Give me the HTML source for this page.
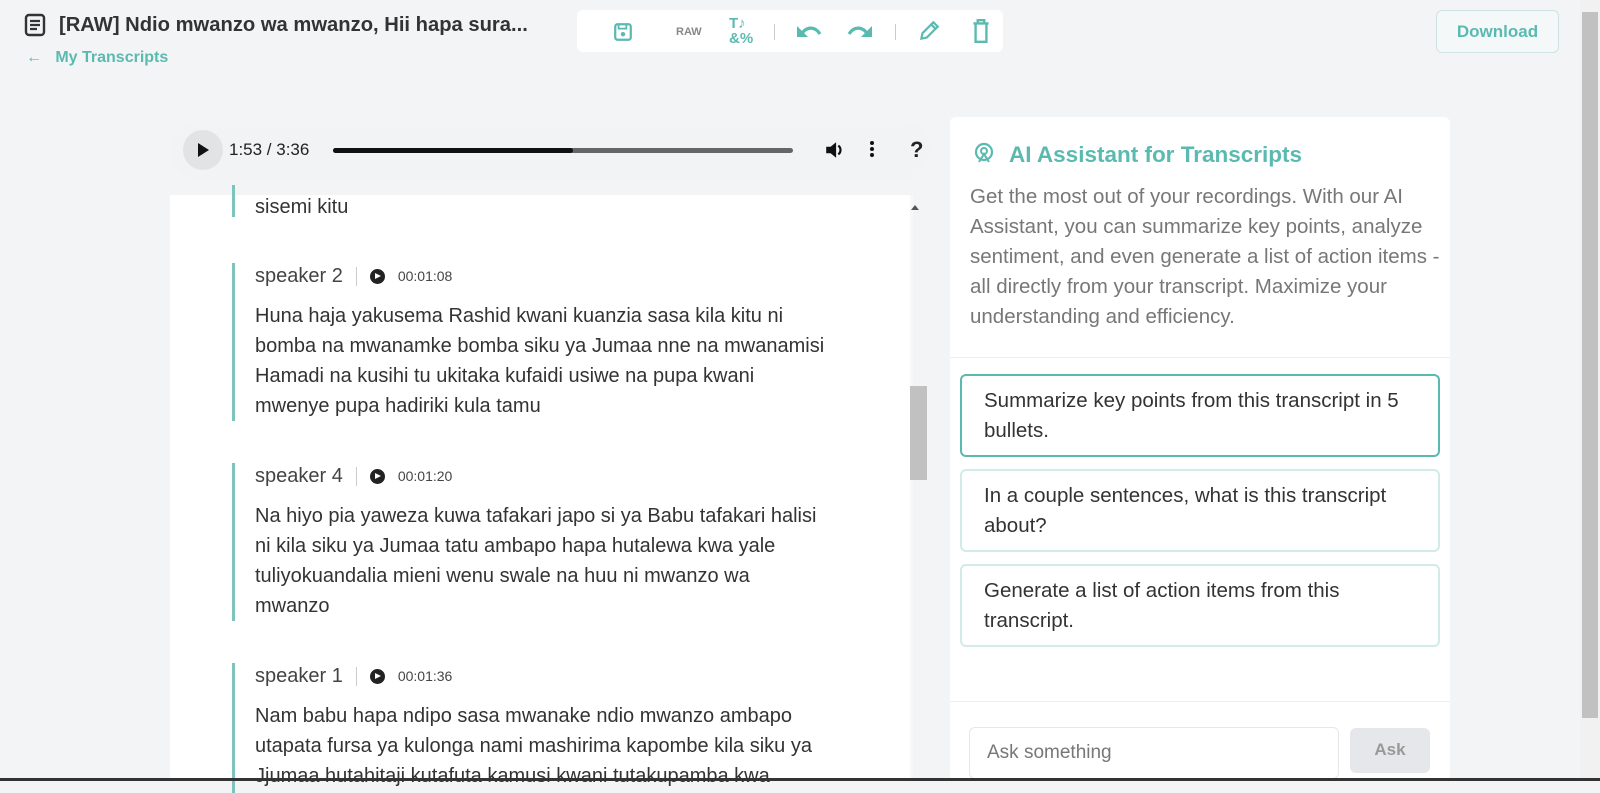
<!DOCTYPE html>
<html><head><meta charset="utf-8">
<style>
*{box-sizing:border-box;margin:0;padding:0}
body{width:1600px;height:781px;overflow:hidden;background:#f3f4f6;font-family:"Liberation Sans",sans-serif;position:relative;color:#333}
.abs{position:absolute}
.title{left:24px;top:13px;font-size:20.2px;font-weight:bold;color:#333;display:flex;align-items:center;gap:13px}
.back{left:26px;top:49px;font-size:16px;font-weight:bold;color:#5bbab0}
.toolbar{left:577px;top:10px;width:426px;height:42px;background:#fff;border-radius:6px}
.dl{left:1436px;top:10px;width:123px;height:43px;border:1px solid #cfe3e1;border-radius:6px;font-size:17px;font-weight:bold;color:#5bbab0;display:flex;align-items:center;justify-content:center;background:#f5f8f8}
.player{left:170px;top:121px;width:760px;height:58px;background:#f1f3f4;border-radius:30px}
.tr{left:170px;top:195px;width:743px;height:586px;background:#fff}
.seg{position:absolute;left:62px;border-left:3px solid #7fc4bc;padding-left:20px;width:600px}
.spk{font-size:20px;color:#444;display:flex;align-items:center;height:26px}
.spk .bar{width:1px;height:19px;background:#ccc;margin:0 13px}
.spk .dot{width:15px;height:15px;border-radius:50%;background:#222;margin-right:13px;position:relative}
.spk .dot:after{content:"";position:absolute;left:5px;top:4px;border-left:6px solid #fff;border-top:3.5px solid transparent;border-bottom:3.5px solid transparent}
.spk .ts{font-size:14px;color:#444}
.txt{font-size:20px;line-height:30px;color:#333;margin-top:12px;width:571px}
.ai{left:950px;top:117px;width:500px;height:664px;background:#fff;border-radius:6px}
.sug{position:absolute;left:10px;width:480px;height:83px;border:2px solid #d3ebe8;border-radius:6px;padding:10px 22px;font-size:20.5px;line-height:30px;color:#333}
</style></head><body>
<div class="abs title">
<svg width="22" height="24" viewBox="0 0 22 24"><rect x="2" y="2" width="18" height="20" rx="3" fill="none" stroke="#333" stroke-width="2.4"/><path d="M6 8h10M6 12h10M6 16h7" stroke="#333" stroke-width="2.2"/></svg>
<span>[RAW] Ndio mwanzo wa mwanzo, Hii hapa sura...</span></div>
<div class="abs back">←&nbsp;&nbsp;&nbsp;My Transcripts</div>
<div class="abs toolbar">
<svg class="abs" style="left:36px;top:12px" width="20" height="20" viewBox="0 0 18 18"><rect x="2" y="2" width="14" height="14" rx="2" fill="none" stroke="#5bbab0" stroke-width="2"/><path d="M5 2v4h7V2" fill="none" stroke="#5bbab0" stroke-width="1.6"/><circle cx="9" cy="11" r="2" fill="#5bbab0"/></svg>
<span class="abs" style="left:99px;top:16px;font-size:11px;font-weight:bold;color:#888">RAW</span>
<div class="abs" style="left:152px;top:6px;font-size:15px;font-weight:bold;color:#5bbab0;line-height:15px">T♪<br>&amp;%</div>
<div class="abs" style="left:197px;top:14px;width:1px;height:16px;background:#ccc"></div>
<svg class="abs" style="left:218px;top:11px" width="28" height="20" viewBox="0 0 28 20"><path d="M6 14c5-9 14-9 19-1" fill="none" stroke="#5bbab0" stroke-width="3.2"/><path d="M2 5v11h11z" fill="#5bbab0"/></svg>
<svg class="abs" style="left:269px;top:11px" width="28" height="20" viewBox="0 0 28 20"><path d="M22 14c-5-9-14-9-19-1" fill="none" stroke="#5bbab0" stroke-width="3.2"/><path d="M26 5v11h-11z" fill="#5bbab0"/></svg>
<div class="abs" style="left:318px;top:14px;width:1px;height:16px;background:#ccc"></div>
<svg class="abs" style="left:340px;top:9px" width="24" height="24" viewBox="0 0 22 22"><path d="M4 18l1-5L15 3l4 4L9 17z M13 5l4 4" fill="none" stroke="#5bbab0" stroke-width="2"/></svg>
<svg class="abs" style="left:394px;top:8px" width="20" height="26" viewBox="0 0 18 24"><path d="M2 5h14M6 5V2h6v3M4 5v17h10V5" fill="none" stroke="#5bbab0" stroke-width="2.2"/></svg>
</div>
<div class="abs dl">Download</div>

<div class="abs player">
<div class="abs" style="left:13px;top:9px;width:40px;height:40px;border-radius:50%;background:#e2e3e4"></div>
<div class="abs" style="left:28px;top:22px;border-left:11px solid #111;border-top:7px solid transparent;border-bottom:7px solid transparent"></div>
<span class="abs" style="left:59px;top:19px;font-size:17px;color:#222">1:53 / 3:36</span>
<div class="abs" style="left:163px;top:27px;width:460px;height:5px;border-radius:3px;background:#666"></div>
<div class="abs" style="left:163px;top:27px;width:240px;height:5px;border-radius:3px;background:#111"></div>
<svg class="abs" style="left:654px;top:18px" width="22" height="22" viewBox="0 0 20 20"><path d="M2 7h4l5-4v14l-5-4H2z" fill="#111"/><path d="M13 6a5 5 0 0 1 0 8" fill="none" stroke="#111" stroke-width="2"/></svg>
<div class="abs" style="left:700px;top:20px;width:4px;height:4px;border-radius:50%;background:#111;box-shadow:0 6px 0 #111,0 12px 0 #111"></div>
<span class="abs" style="left:740px;top:16px;font-size:22px;font-weight:bold;color:#222">?</span>
</div>

<div class="abs tr">
<div class="seg" style="top:-10px;height:32px"><div class="txt" style="margin-top:0;padding-top:7px">sisemi kitu</div></div>
<div class="seg" style="top:68px">
<div class="spk">speaker 2<span class="bar"></span><span class="dot"></span><span class="ts">00:01:08</span></div>
<div class="txt">Huna haja yakusema Rashid kwani kuanzia sasa kila kitu ni bomba na mwanamke bomba siku ya Jumaa nne na mwanamisi Hamadi na kusihi tu ukitaka kufaidi usiwe na pupa kwani mwenye pupa hadiriki kula tamu</div></div>
<div class="seg" style="top:268px">
<div class="spk">speaker 4<span class="bar"></span><span class="dot"></span><span class="ts">00:01:20</span></div>
<div class="txt">Na hiyo pia yaweza kuwa tafakari japo si ya Babu tafakari halisi ni kila siku ya Jumaa tatu ambapo hapa hutalewa kwa yale tuliyokuandalia mieni wenu swale na huu ni mwanzo wa mwanzo</div></div>
<div class="seg" style="top:468px;height:130px">
<div class="spk">speaker 1<span class="bar"></span><span class="dot"></span><span class="ts">00:01:36</span></div>
<div class="txt">Nam babu hapa ndipo sasa mwanake ndio mwanzo ambapo utapata fursa ya kulonga nami mashirima kapombe kila siku ya Jjumaa hutahitaji kutafuta kamusi kwani tutakupamba kwa</div></div>
<div class="abs" style="left:740px;top:0;width:3px;height:586px;background:#f8f8f8"></div>
<div class="abs" style="left:741px;top:10px;border-bottom:5px solid #555;border-left:4px solid transparent;border-right:4px solid transparent"></div>
<div class="abs" style="left:740px;top:191px;width:17px;height:94px;background:#c1c1c1"></div>
</div>

<div class="abs ai">
<svg class="abs" style="left:22px;top:24px" width="24" height="24" viewBox="0 0 24 24"><circle cx="12" cy="11" r="8" fill="none" stroke="#5bbab0" stroke-width="2.2"/><circle cx="12" cy="10" r="3" fill="none" stroke="#5bbab0" stroke-width="2"/><path d="M7 21l5-8 5 8" fill="none" stroke="#5bbab0" stroke-width="2"/></svg>
<div class="abs" style="left:59px;top:25px;font-size:22.5px;font-weight:bold;color:#5bbab0">AI Assistant for Transcripts</div>
<div class="abs" style="left:20px;top:65px;width:470px;font-size:20.5px;line-height:30px;color:#777">Get the most out of your recordings. With our AI Assistant, you can summarize key points, analyze sentiment, and even generate a list of action items - all directly from your transcript. Maximize your understanding and efficiency.</div>
<div class="abs" style="left:0;top:240px;width:500px;height:1px;background:#eee"></div>
<div class="sug" style="top:257px;border-color:#5bbab0">Summarize key points from this transcript in 5 bullets.</div>
<div class="sug" style="top:352px">In a couple sentences, what is this transcript about?</div>
<div class="sug" style="top:447px">Generate a list of action items from this transcript.</div>
<div class="abs" style="left:0;top:584px;width:500px;height:1px;background:#eee"></div>
<div class="abs" style="left:19px;top:610px;width:370px;height:52px;border:1px solid #e5e7eb;border-radius:6px;font-size:19px;color:#777;padding:14px 17px">Ask something</div>
<div class="abs" style="left:400px;top:611px;width:80px;height:45px;background:#e5e7eb;border-radius:6px;font-size:17px;font-weight:bold;color:#999;text-align:center;line-height:43px">Ask</div>
</div>

<div class="abs" style="left:1580px;top:0;width:20px;height:781px;background:#f1f1f1"></div>
<div class="abs" style="left:1582px;top:12px;width:16px;height:706px;background:#c1c1c1"></div>
<div class="abs" style="left:0;top:778px;width:1600px;height:3px;background:#333"></div>
</body></html>
